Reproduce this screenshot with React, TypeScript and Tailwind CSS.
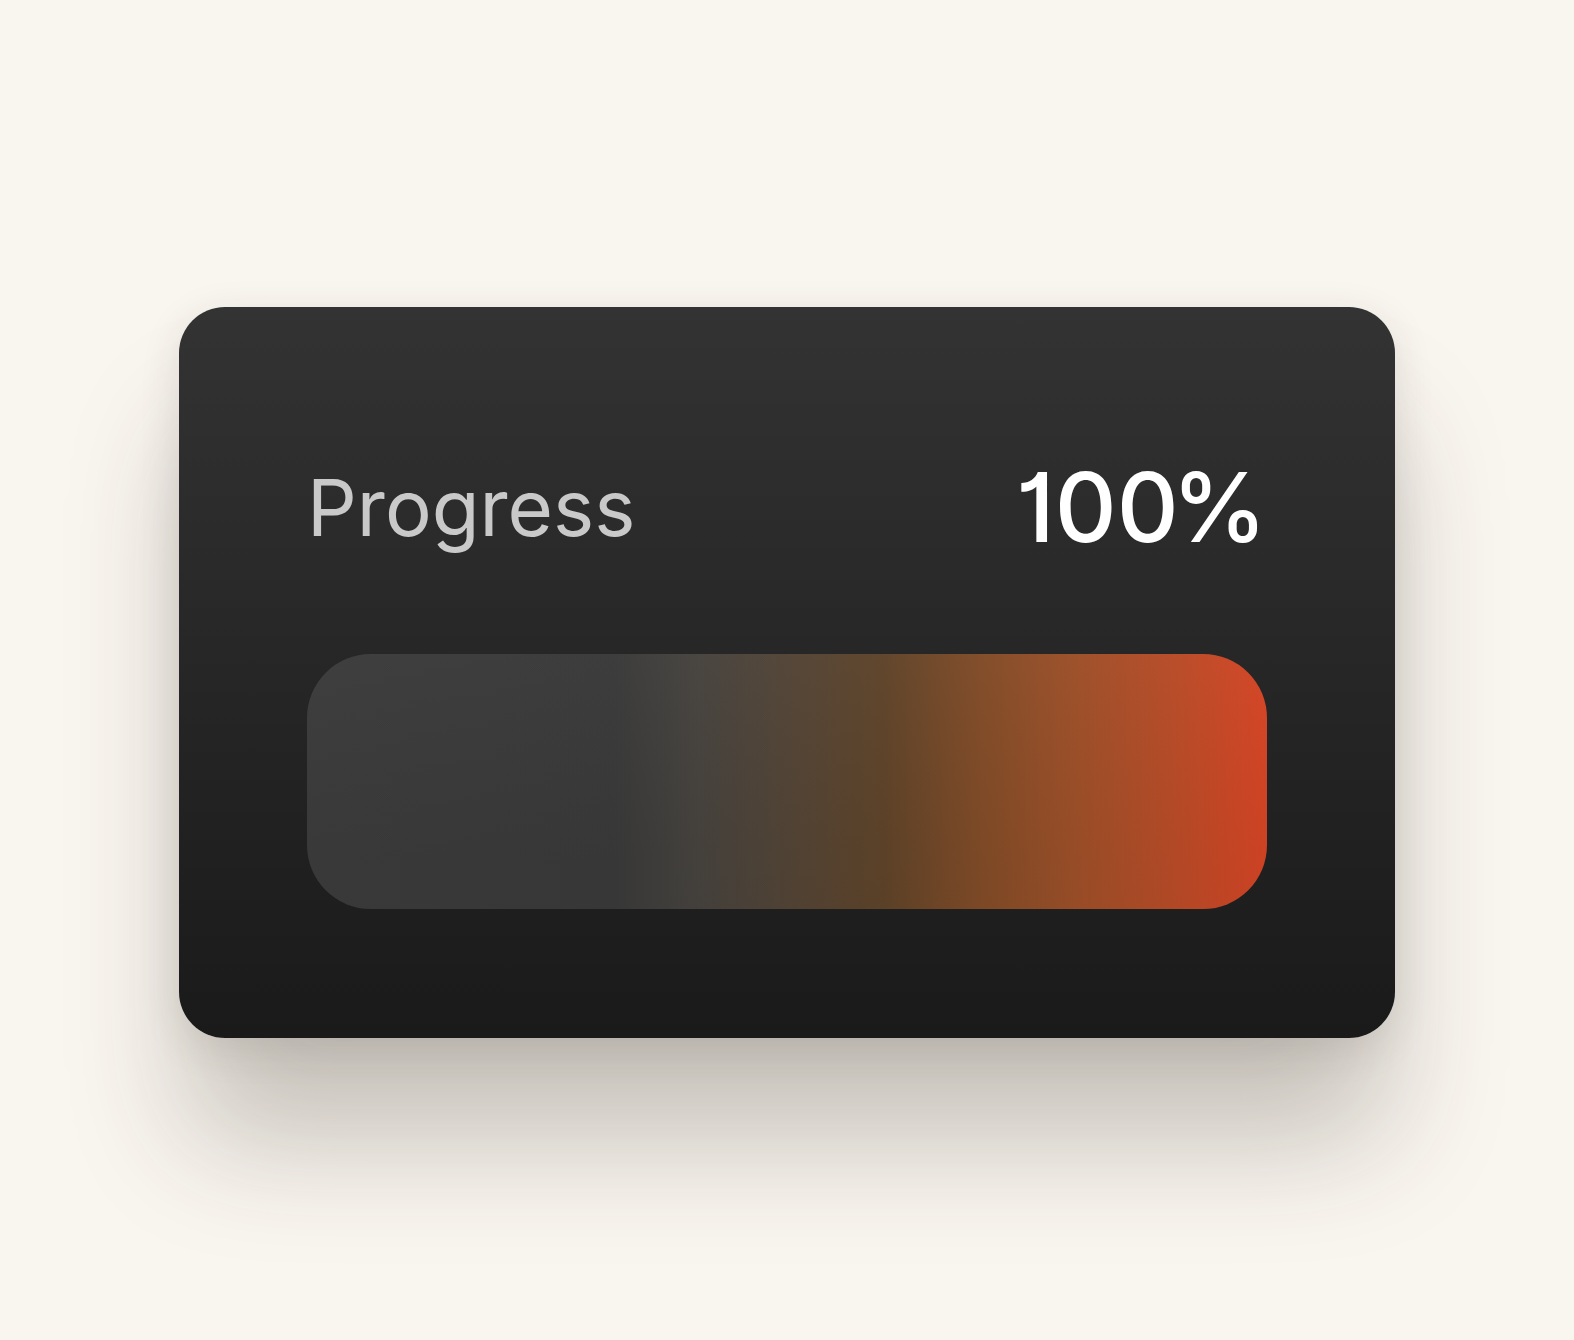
export default function App() {
  return (
    <div
      className="min-h-screen w-full bg-[#f9f5ef] flex items-center justify-center pt-[5px]"
      style={{ fontFamily: 'Inter, "Noto Sans", sans-serif' }}
    >
      <div className="w-[1216px] rounded-[46px] bg-gradient-to-b from-[#333333] to-[#1a1a1a] shadow-[0_10px_40px_rgba(60,50,40,0.12),0_110px_120px_-10px_rgba(60,50,40,0.27)] px-[128px] pt-[143px] pb-[129px] flex flex-col">
        {/* Header */}
        <div className="flex items-center justify-between leading-[1.2]">
          <span className="text-[#c9c9c9] font-normal text-[78px]">Progress</span>
          <span className="text-white font-medium text-[96px] [font-feature-settings:'cv01']">
            100<span className="ml-[-7px]">%</span>
          </span>
        </div>

        {/* Bar */}
        <div className="mt-[89px] h-[255px] rounded-[64px] overflow-hidden relative bg-[linear-gradient(to_right,#3b3b3b_0%,#393939_32%,#45423e_40%,#524436_50%,#5e4329_60%,#804b27_70%,#9c4f28_80%,#b74b27_90%,#d44424_100%)]">
          <div className="absolute inset-0 bg-gradient-to-b from-white/[0.02] to-black/[0.04]" />
        </div>
      </div>
    </div>
  )
}
